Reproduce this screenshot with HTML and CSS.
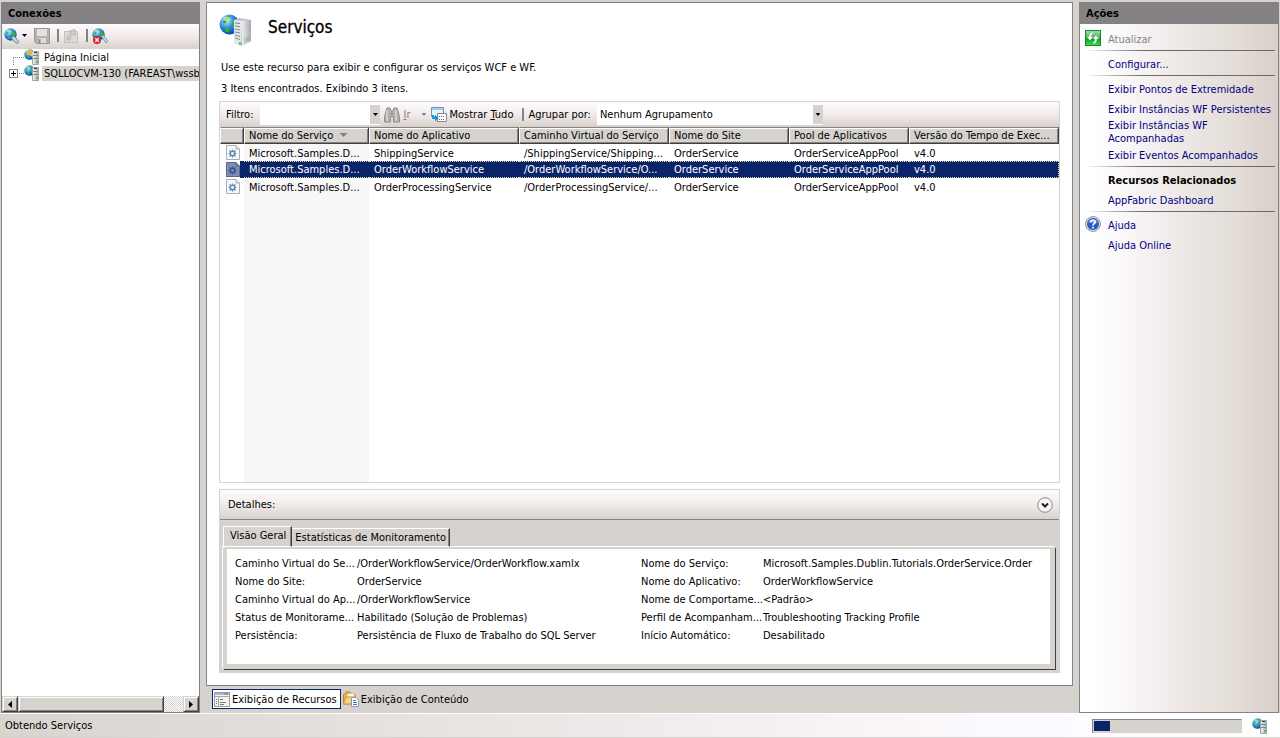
FILE: index.html
```html
<!DOCTYPE html>
<html lang="pt-BR">
<head>
<meta charset="utf-8">
<title>Serviços</title>
<link rel="stylesheet" href="styles.css">
</head>
<body>
<svg class="defs" aria-hidden="true">
  <defs>
    <radialGradient id="sea" cx=".35" cy=".3" r=".8"><stop offset="0" stop-color="#c8f0ff"/><stop offset=".45" stop-color="#2f8fe0"/><stop offset="1" stop-color="#0a3596"/></radialGradient>
    <linearGradient id="metal"><stop offset="0" stop-color="#f4f5f6"/><stop offset="1" stop-color="#a4a9af"/></linearGradient>
    <linearGradient id="green" x2="0" y2="1"><stop offset="0" stop-color="#a5dcb0"/><stop offset=".5" stop-color="#4caf5c"/><stop offset=".51" stop-color="#0d9424"/><stop offset="1" stop-color="#3fe04c"/></linearGradient>
    <symbol id="globe" viewBox="0 0 12 12">
      <circle cx="6" cy="6" r="5.7" fill="url(#sea)"/>
      <path d="M3 2.500 5 1.200 7 1.500 6 3.200 4.500 4 3.500 5.500 2 5zM7.500 4.500 10 3.500 11 6 10 8.500 8 8zM3.500 7.500 6 8 5.500 10.500 3.500 9.500z" fill="#35b52e"/>
      <ellipse cx="4.500" cy="2.800" rx="2" ry="1.200" fill="#fff" opacity=".55"/>
    </symbol>
    <symbol id="globe-server" viewBox="0 0 16 16">
      <use href="#globe" x="0" y="0" width="11" height="11"/>
      <path d="M8.500 2.500H14.500V15.500H8.500z" fill="url(#metal)" stroke="#a0a5aa"/>
      <path d="M10 3.500H13" stroke="#30363c"/>
      <path d="M9 6.500H14M9 9.500H14" stroke="#80868c"/>
      <rect x="12" y="12" width="2" height="2" fill="#39d817"/>
    </symbol>
    <symbol id="service-file" viewBox="0 0 14 16">
      <path d="M.5.5H10L13.500 4V14.500H.5z" fill="#f8f9fb" stroke="#a8adb5"/>
      <path d="M10 .5V4H13.500" fill="#dfe3e8" stroke="#a8adb5"/>
      <circle cx="6.500" cy="8.500" r="2.200" fill="none" stroke="#6088b4" stroke-width="1.500"/>
      <path d="M6.500 4.500V6.500M6.500 10.500V12.500M2.500 8.500H4.500M8.500 8.500H10.500M3.500 5.500 5 7M8 10 9.500 11.500M3.500 11.500 5 10M8 7 9.500 5.500" stroke="#6088b4" stroke-width="1.200"/>
    </symbol>
  </defs>
</svg>

<main class="workspace">
  <section class="panel connections">
    <h2 class="panel-title">Conexões</h2>
    <div class="toolbar conn-tools">
      <button class="tool tool-connect" aria-label="Conectar">
        <svg width="16" height="16" viewBox="0 0 16 16"><use href="#globe" x="0" y="0" width="13" height="13"/><path d="M7 9.500 10 8l2 2 3 4-2 1.500-4-3z" fill="#bcd4e0" stroke="#587c94" stroke-width=".8"/></svg>
        <span class="caret"></span>
      </button>
      <button class="tool" aria-label="Salvar" disabled>
        <svg width="16" height="16" viewBox="0 0 16 16"><path d="M.5.5H15.500V15.500H2.500L.5 13.500z" fill="#b5b3b1" stroke="#999795"/><path d="M3 1H13V8H3z" fill="#e4e1df"/><path d="M4 10H12V15H4z" fill="#dedbd9"/><path d="M5.500 11V15" stroke="#8b8987" stroke-width="2"/></svg>
      </button>
      <span class="separator"></span>
      <button class="tool" aria-label="Subir" disabled>
        <svg width="16" height="16" viewBox="0 0 16 16"><path d="M1.500 3.500H14.500V14.500H1.500z" fill="#dcdad8" stroke="#c2c0be"/><path d="M4 12C4 8 6 6 8 5L6.500 3 12 1.500 12 7 10.500 6C8 8 7 9 7 12z" fill="#d0cecc" stroke="#b4b2b0"/></svg>
      </button>
      <span class="separator"></span>
      <button class="tool" aria-label="Desconectar">
        <svg width="16" height="16" viewBox="0 0 16 16"><use href="#globe" x="0" y="0" width="13" height="13"/><path d="M9 8 11 7 16 13 14 15z" fill="#bcd4e0" stroke="#587c94" stroke-width=".6"/><circle cx="5" cy="12" r="4" fill="#d6222b"/><path d="M3.300 10.300 6.700 13.700M6.700 10.300 3.300 13.700" stroke="#fff" stroke-width="1.300"/></svg>
      </button>
    </div>
    <ul class="tree">
      <li class="node"><span class="branch branch-first"></span><svg width="16" height="16"><use href="#globe-server"/><path d="M1 2 5 1 9 3 8 7 5 5z" fill="#f4ad25" stroke="#fbe3a0" stroke-width=".7"/></svg><span class="node-text">Página Inicial</span></li>
      <li class="node"><span class="branch branch-last"><button class="expander" aria-label="Expandir"></button></span><svg width="16" height="16"><use href="#globe-server"/></svg><span class="node-text selected">SQLLOCVM-130 (FAREAST\wssb</span></li>
    </ul>
    <div class="scrollbar">
      <button class="scroll-btn" aria-label="Esquerda"><svg width="4" height="7"><path d="M4 0V7L0 3.500z"/></svg></button>
      <span class="thumb"></span>
      <span class="track"></span>
      <button class="scroll-btn" aria-label="Direita"><svg width="4" height="7"><path d="M0 0V7L4 3.500z"/></svg></button>
    </div>
  </section>

  <section class="center">
    <div class="page">
      <header class="page-head">
        <svg width="33" height="33" viewBox="0 0 33 33"><use href="#globe" x="0" y="0" width="21" height="21"/><path d="M15 6 20 4 32 6V27L23 32 15 29z" fill="#b9bec3"/><path d="M15 6 22 6.500V32L15 29z" fill="#e3e6e8"/><path d="M22 6.500 32 6V27L23 32z" fill="url(#metal)"/><path d="M16 9 21 9.500M16 12 21 12.700M16 15 21 16M16 18 21 19M16 21 21 22.500M16 24 21 25.500" stroke="#81888f"/><path d="M25 26 30 23M25 28 30 25" stroke="#8f959b" stroke-width=".7"/><circle cx="21" cy="29.500" r="1.300" fill="#32d21a"/></svg>
        <h1>Serviços</h1>
      </header>
      <p class="intro">Use este recurso para exibir e configurar os serviços WCF e WF.</p>
      <p class="count">3 Itens encontrados. Exibindo 3 itens.</p>

      <div class="grid">
        <div class="toolbar grid-tools">
          <label for="filter">Filtro:</label>
          <span class="combo combo-filter"><input id="filter" type="text"><button class="combo-btn" aria-label="Abrir filtro"><span class="caret"></span></button></span>
          <button class="tool go" disabled>
            <svg width="16" height="16" viewBox="0 0 16 16"><path d="M2 4 3 1H6L7 4H9L10 1H13L14 4 15.500 10V15H9.500V10H6.500V15H.5V10z" fill="#b3b0ae" stroke="#918f8d"/><path d="M3 3V14M12 3V14" stroke="#dad7d5" stroke-width="1.500"/><path d="M7 6.500H9" stroke="#777"/></svg>
            <span><u>I</u>r</span><span class="caret"></span>
          </button>
          <button class="tool show-all">
            <svg width="16" height="16" viewBox="0 0 16 16"><path d="M.5.5H12.500V9.500H.5z" fill="#e8f3fc" stroke="#6798c4"/><path d="M1 2H12" stroke="#a6cdee" stroke-width="2"/><path d="M6.500 6.500H15.500V14.500H6.500z" fill="#fff" stroke="#858a91"/><path d="M8 9.500H14M8 12.500H14" stroke="#626870" stroke-dasharray="1 1"/><path d="M1 8V12H4V14.500L8 11 4 8V10H3V8z" fill="#2196dc"/></svg>
            <span>Mostrar <u>T</u>udo</span>
          </button>
          <span class="separator"></span>
          <label for="group">Agrupar por:</label>
          <span class="combo combo-group"><select id="group"><option>Nenhum Agrupamento</option></select><span class="combo-btn combo-mark"><span class="caret"></span></span></span>
        </div>
        <div class="grid-body">
          <table>
            <colgroup><col class="c-icon"><col class="c-name"><col class="c-wide"><col class="c-wide"><col class="c-mid"><col class="c-mid"><col></colgroup>
            <thead><tr><th></th><th>Nome do Serviço <span class="sort"></span></th><th>Nome do Aplicativo</th><th>Caminho Virtual do Serviço</th><th>Nome do Site</th><th>Pool de Aplicativos</th><th>Versão do Tempo de Exec...</th></tr></thead>
            <tbody>
              <tr><td class="icon-cell"><svg width="14" height="16"><use href="#service-file"/></svg></td><td>Microsoft.Samples.D...</td><td>ShippingService</td><td>/ShippingService/Shipping...</td><td>OrderService</td><td>OrderServiceAppPool</td><td>v4.0</td></tr>
              <tr class="row-selected"><td class="icon-cell"><svg width="14" height="16"><use href="#service-file"/><path d="M0 0H10L14 4V15H0z" fill="#0a246a" opacity=".5"/></svg></td><td>Microsoft.Samples.D...</td><td>OrderWorkflowService</td><td>/OrderWorkflowService/O...</td><td>OrderService</td><td>OrderServiceAppPool</td><td>v4.0</td></tr>
              <tr><td class="icon-cell"><svg width="14" height="16"><use href="#service-file"/></svg></td><td>Microsoft.Samples.D...</td><td>OrderProcessingService</td><td>/OrderProcessingService/...</td><td>OrderService</td><td>OrderServiceAppPool</td><td>v4.0</td></tr>
            </tbody>
          </table>
        </div>
      </div>

      <section class="details">
        <header class="toolbar details-head">
          <span>Detalhes:</span>
          <button class="collapse" aria-label="Recolher"><svg width="16" height="16" viewBox="0 0 16 16"><circle cx="8" cy="8" r="7.300" fill="#f7f4f4" stroke="#8b8990"/><path d="M5 6.500 8 9.500 11 6.500" fill="none" stroke="#222" stroke-width="2"/></svg></button>
        </header>
        <div class="tabs" role="tablist">
          <button class="tab tab-active" role="tab" aria-selected="true">Visão Geral</button>
          <button class="tab" role="tab" aria-selected="false">Estatísticas de Monitoramento</button>
        </div>
        <div class="tab-panel" role="tabpanel">
          <dl>
            <dt>Caminho Virtual do Se...</dt><dd>/OrderWorkflowService/OrderWorkflow.xamlx</dd>
            <dt>Nome do Site:</dt><dd>OrderService</dd>
            <dt>Caminho Virtual do Ap...</dt><dd>/OrderWorkflowService</dd>
            <dt>Status de Monitorame...</dt><dd>Habilitado (Solução de Problemas)</dd>
            <dt>Persistência:</dt><dd>Persistência de Fluxo de Trabalho do SQL Server</dd>
          </dl>
          <dl>
            <dt>Nome do Serviço:</dt><dd>Microsoft.Samples.Dublin.Tutorials.OrderService.Order</dd>
            <dt>Nome do Aplicativo:</dt><dd>OrderWorkflowService</dd>
            <dt>Nome de Comportame...</dt><dd>&lt;Padrão&gt;</dd>
            <dt>Perfil de Acompanham...</dt><dd>Troubleshooting Tracking Profile</dd>
            <dt>Início Automático:</dt><dd>Desabilitado</dd>
          </dl>
        </div>
      </section>
    </div>
    <nav class="views">
      <button class="view view-active">
        <svg width="16" height="15" viewBox="0 0 16 15"><path d="M.5.5H15.500V14.500H.5z" fill="#f5f3f2" stroke="#9a9ca3"/><path d="M1 2H15" stroke="#b4b8c3" stroke-width="2"/><path d="M1 4.500H15M4.500 5V14" stroke="#a5a7ae"/><path d="M2 7.500H3M2 9.500H3M2 11.500H3M10 2H14" stroke="#777"/><path d="M6 7.500H9M6 10.500H12M6 12.500H10" stroke="#777"/></svg>
        Exibição de Recursos</button>
      <button class="view">
        <svg width="16" height="16" viewBox="0 0 16 16"><path d="M.5 3H2L3 1H7L8 3H12V13H.5z" fill="#e8b44b" stroke="#bd8a2c"/><path d="M4 3 11 2 12 9 5 10z" fill="#fdf7e4" stroke="#cbb274" stroke-width=".6"/><path d="M.5 13 3 6H12L10 13z" fill="#f4d583" stroke="#c99937"/><path d="M8.500 6.500H13L15.500 9V15.500H8.500z" fill="#fff" stroke="#8b98ad"/><path d="M10 9.500H13M10 11.500H14M10 13.500H14" stroke="#3d73b8"/></svg>
        Exibição de Conteúdo</button>
    </nav>
  </section>

  <aside class="panel actions">
    <h2 class="panel-title">Ações</h2>
    <ul class="action-group first">
      <li class="disabled"><svg class="action-icon" width="16" height="16" viewBox="0 0 16 16"><rect x=".5" y=".5" width="15" height="15" fill="url(#green)" stroke="#168a2d"/><path d="M7.500 3C5.500 3.500 5 5 5 7.500M8.500 13C10.500 12.500 11 11 11 8.500" fill="none" stroke="#fff" stroke-width="1.700"/><path d="M2 7H8L5 10.500zM8 9H14L11 5.500z" fill="#fff"/></svg><span>Atualizar</span></li>
    </ul>
    <ul class="action-group"><li><a href="#">Configurar...</a></li></ul>
    <ul class="action-group">
      <li><a href="#">Exibir Pontos de Extremidade</a></li>
      <li><a href="#">Exibir Instâncias WF Persistentes</a></li>
      <li class="wrapped"><a href="#">Exibir Instâncias WF<br>Acompanhadas</a></li>
      <li><a href="#">Exibir Eventos Acompanhados</a></li>
    </ul>
    <ul class="action-group"><li><strong>Recursos Relacionados</strong></li><li><a href="#">AppFabric Dashboard</a></li></ul>
    <ul class="action-group">
      <li><svg class="action-icon" width="16" height="16" viewBox="0 0 16 16"><circle cx="8" cy="8" r="7.400" fill="#e2e5ea" stroke="#888f9d"/><circle cx="8" cy="8" r="6" fill="#2a5bc4"/><path d="M3 6.500A5.500 5.500 0 0 1 13 6.500Q8 8 3 6.500" fill="#6c93de"/><path d="M5.800 6.200C5.800 3.500 10.300 3.700 10.200 6.200 10.100 7.700 8 7.700 8 9.500M8 10.800V12.500" fill="none" stroke="#fff" stroke-width="1.700"/></svg><a href="#">Ajuda</a></li>
      <li><a href="#">Ajuda Online</a></li>
    </ul>
  </aside>
</main>

<footer class="status">
  <span>Obtendo Serviços</span>
  <progress value="11" max="100" aria-label="Progresso"></progress>
  <svg width="16" height="16"><use href="#globe-server"/></svg>
</footer>
</body>
</html>
```
FILE: styles.css
```css
:root {
  --face: #d6d3ce;
  --shadow: #848284;
  --dark: #424142;
  --navy: #0a246a;
  --bar: linear-gradient(#fffbff, #f1ebea 50%, #d9d0cb);
}
* { box-sizing: border-box; }
body {
  margin: 0;
  min-height: 100vh;
  display: flex;
  flex-direction: column;
  background: var(--face);
  color: #000;
  font: 11px/13px "DejaVu Sans Condensed", "Noto Sans", sans-serif;
  white-space: nowrap;
}
h1, h2, p, ul, dl, dd { margin: 0; padding: 0; }
ul { list-style: none; }
button, input, select { font: inherit; color: inherit; border: 0; border-radius: 0; padding: 0; background: none; }
svg { display: block; flex: none; }
.defs { position: absolute; width: 0; height: 0; }

.workspace { flex: 1; display: flex; gap: 6px; padding: 2px 1px 0; }
.panel { border: 1px solid var(--shadow); display: flex; flex-direction: column; min-width: 0; }
.panel-title { background: var(--shadow); font-size: 11px; line-height: 22px; height: 21px; padding-left: 6px; }
.toolbar { display: flex; align-items: center; background: var(--bar); }
.tool { display: flex; align-items: center; gap: 3px; }
.tool:disabled { color: #848284; }
.caret { width: 5px; height: 3px; background: currentColor; clip-path: polygon(0 0, 100% 0, 50% 100%); }
.separator { width: 2px; height: 13px; background: var(--shadow); }

.connections { width: 199px; background: #fff; overflow: hidden; }
.conn-tools { height: 25px; padding: 0 0 2px 2px; gap: 4px; }
.tool-connect { gap: 2px; margin-right: 3px; }
.conn-tools .separator { margin-left: 3px; }
.tree { flex: 1; overflow: hidden; }
.node { display: flex; height: 16px; align-items: center; }
.node-text { margin-left: 2px; padding: 1px 0 1px 2px; }
.selected { background: var(--face); flex: 1; }
.branch { position: relative; width: 22px; height: 16px; flex: none; }
.branch::after { content: ""; position: absolute; left: 11px; right: 0; top: 8px; border-top: 1px dotted var(--shadow); }
.branch-first::before { content: ""; position: absolute; left: 11px; top: 8px; bottom: 0; border-left: 1px dotted var(--shadow); }
.expander {
  position: absolute; z-index: 1; left: 7px; top: 4px; width: 9px; height: 9px; border: 1px solid var(--shadow);
  background: linear-gradient(#000, #000) center / 5px 1px no-repeat, linear-gradient(#000, #000) center / 1px 5px no-repeat, #fff;
}
.scrollbar { display: flex; height: 16px; }
.scroll-btn, .thumb {
  background: var(--face);
  border: 1px solid; border-color: var(--face) var(--dark) var(--dark) var(--face);
  box-shadow: inset 1px 1px #fff, inset -1px -1px var(--shadow);
}
.scroll-btn { width: 16px; display: grid; place-items: center; }
.thumb { flex: 147; }
.track { flex: 19; background: repeating-conic-gradient(#fff 0 25%, var(--face) 0 50%) 0 0 / 2px 2px; }

.center { flex: 1; min-width: 0; display: flex; flex-direction: column; }
.page { flex: 1; display: flex; flex-direction: column; background: #fff; border: 1px solid var(--shadow); padding: 11px 12px 12px; }
.page-head { display: flex; gap: 16px; height: 47px; }
.page-head h1 { font-size: 17px; line-height: 26px; font-weight: 400; -webkit-text-stroke: 0.3px #000; }
.intro, .count { padding-left: 2px; margin-bottom: 8px; }
.count { margin-bottom: 6px; }
.grid { flex: 1; display: flex; flex-direction: column; border: 1px solid var(--face); }
.grid-tools { height: 25px; padding-left: 6px; }
.combo { display: flex; align-items: center; height: 21px; background: #fff; position: relative; }
.combo-filter { width: 120px; margin: 0 4px 0 7px; }
.combo-group { width: 226px; margin-left: 6px; }
.combo input { flex: 1; min-width: 0; height: 21px; outline: 0; }
.combo select { appearance: none; flex: 1; height: 21px; padding-left: 3px; outline: 0; }
.combo-btn { width: 10px; height: 19px; background: var(--face); display: grid; place-items: center; }
.combo-mark { position: absolute; right: 0; pointer-events: none; }
.go .caret { margin-left: 8px; }
.go { margin-right: 5px; }
.grid-tools .separator { margin: 0 4px 0 9px; }
.show-all { gap: 2px; }
.grid-body { flex: 1; background: linear-gradient(90deg, #fff 24px, #f7f7f7 24px 149px, #fff 149px); }
table { width: 100%; table-layout: fixed; border-collapse: separate; border-spacing: 0; }
.c-icon { width: 24px; }
.c-name { width: 125px; }
.c-wide { width: 150px; }
.c-mid { width: 120px; }
th, td { padding: 0 2px 0 5px; text-align: left; font-weight: 400; overflow: hidden; text-overflow: ellipsis; }
th {
  height: 17px; line-height: 15px; background: var(--face);
  border: 1px solid; border-color: var(--shadow) var(--dark) var(--dark) #fff;
  box-shadow: inset 0 1px #fff, inset -1px -1px var(--shadow);
  padding-left: 4px;
}
td { height: 17px; line-height: 15px; padding-top: 2px; }
.sort { display: inline-block; width: 8px; height: 4px; margin: 0 0 2px 3px; background: var(--shadow); clip-path: polygon(0 0, 100% 0, 50% 100%); }
.icon-cell { padding: 1px 0 0 6px; }
.row-selected { color: #fff; }
.row-selected td { background: var(--navy); border: 1px dotted #f5dba0; border-width: 1px 0; padding-top: 1px; line-height: 14px; }
.row-selected td:last-child { border-right-width: 1px; }
.row-selected .icon-cell { border: 0; background: linear-gradient(90deg, #fff 20px, var(--navy) 20px); }

.details { margin-top: 6px; border: 1px solid var(--face); background: var(--face); padding-bottom: 3px; }
.details-head { height: 30px; padding: 0 6px 0 8px; justify-content: space-between; border-bottom: 1px solid var(--shadow); }
.tabs { display: flex; align-items: flex-end; padding: 6px 3px 0; height: 27px; }
.tab { height: 19px; padding: 0 3px 0 2px; border: 1px solid; border-color: #fff var(--dark) transparent transparent; box-shadow: inset -1px 0 var(--shadow); }
.tab-active { height: 21px; padding: 0 5px 2px 6px; border-left-color: #fff; border-top-left-radius: 2px; }
.tab-panel {
  display: grid; grid-template-columns: 406px 1fr; margin: 0 4px 0 3px; padding: 6px 20px 16px 8px; background: #fff;
  min-height: 122px;
  border: 4px solid var(--face); border-top-width: 2px;
  box-shadow: -1px -1px #fff, inset -1px -1px var(--face), 1px 1px var(--dark);
}
dl { display: grid; grid-template-columns: 118px 1fr; column-gap: 4px; grid-auto-rows: 18px; align-content: start; line-height: 18px; min-width: 0; }

.views { display: flex; gap: 2px; padding: 3px 5px 4px 6px; }
.view { display: flex; align-items: center; gap: 2px; height: 20px; padding: 0 3px 0 1px; border: 1px solid transparent; }
.view + .view { padding-left: 0; margin-left: -1px; }
.view-active { border-color: var(--navy); background: #fff; }

.actions { width: 200px; background: linear-gradient(90deg, #fff 8%, #f7f3f3 30%, #ece6e4 55%, #e5dfda 75%, #d9cfca); }
.action-group { position: relative; padding: 3px 3px 1px 28px; }
.action-group + .action-group { padding-top: 4px; background: linear-gradient(90deg, transparent, #6b696b 60px) 4px 0 / calc(100% - 7px) 1px no-repeat; }
.first { padding-top: 5px; }
.action-group li { padding: 4px 0 3px; }
.action-group .wrapped { padding: 0; }
.action-icon { position: absolute; left: 5px; margin-top: -3px; }
.disabled { color: #848284; }
a { color: #000084; text-decoration: none; }

.status {
  display: flex; align-items: center; gap: 10px; height: 25px; padding: 0 12px 0 5px;
  border-top: 1px solid #fff; border-bottom: 1px solid var(--face);
  background: linear-gradient(90deg, #dad4cf, #ebe5e4 40%, #fdfaff 78%, #fff);
}
.status span { flex: 1; }
progress { appearance: none; width: 150px; height: 14px; border: 1px solid; border-color: var(--shadow) var(--face) var(--face) var(--shadow); padding: 1px; background: var(--face); }
progress::-webkit-progress-bar { background: var(--face); }
progress::-webkit-progress-value { background: var(--navy); }
```
